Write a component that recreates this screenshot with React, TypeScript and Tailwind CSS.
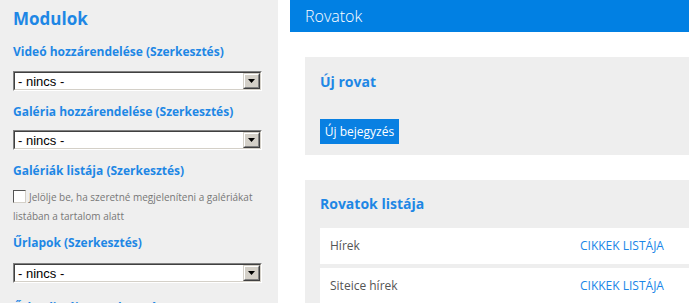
import React from "react";

function Label({ children, className = "" }: { children: React.ReactNode; className?: string }) {
  return (
    <div className={`text-[12px] leading-[16px] font-bold text-[#1e87e5] whitespace-nowrap ${className}`}>
      {children}
    </div>
  );
}

function Select({ className = "" }: { className?: string }) {
  return (
    <div
      className={`w-[249px] h-[20px] border border-t-[#808080] border-l-[#808080] border-r-white border-b-white ${className}`}
    >
      <div className="h-full flex items-stretch bg-white border border-t-[#404040] border-l-[#404040] border-r-[#d4d0c8] border-b-[#d4d0c8]">
        <span className="flex-1 pl-[3px] flex items-center text-[13px] leading-none text-black font-['Liberation_Sans',Arial,sans-serif]">
          - nincs -
        </span>
        <div className="w-[17px] h-full border border-t-[#d4d0c8] border-l-[#d4d0c8] border-r-[#404040] border-b-[#404040]">
          <div className="w-full h-full flex items-center justify-center bg-[#d4d0c8] border border-t-white border-l-white border-r-[#808080] border-b-[#808080]">
            <svg width="7" height="4" viewBox="0 0 7 4">
              <polygon points="0,0 7,0 3.5,4" fill="#000" />
            </svg>
          </div>
        </div>
      </div>
    </div>
  );
}

export default function App() {
  return (
    <div className="w-[689px] h-[303px] overflow-hidden flex bg-white font-['Open_Sans',sans-serif]">
      <aside className="w-[278px] shrink-0 bg-[#efefef] pl-[13px] pt-[7px]">
        <h2 className="text-[17px] leading-[24px] font-bold text-[#1e87e5]">Modulok</h2>
        <Label className="mt-[13px]">Videó hozzárendelése (Szerkesztés)</Label>
        <Select className="mt-[11px]" />
        <Label className="mt-[13px]">Galéria hozzárendelése (Szerkesztés)</Label>
        <Select className="mt-[10px]" />
        <Label className="mt-[13px]">Galériák listája (Szerkesztés)</Label>
        <p className="mt-[9px] w-[250px] text-[10px] leading-[19px] text-[#777]">
          <span className="inline-block align-[-2px] w-[13px] h-[13px] mr-[3px] bg-white border border-t-[#555] border-l-[#555] border-r-[#d4d0c8] border-b-[#d4d0c8]" />
          Jelölje be, ha szeretné megjeleníteni a galériákat listában a tartalom alatt
        </p>
        <Label className="mt-[9px]">Űrlapok (Szerkesztés)</Label>
        <Select className="mt-[12px]" />
        <Label className="mt-[17px]">Űrlap listája (Szerkesztés)</Label>
      </aside>
      <div className="w-[12px] shrink-0" />
      <main className="flex-1 min-w-0">
        <header className="h-[32px] bg-[#0180e3] pl-[15px] flex items-center">
          <h1 className="text-[16px] font-light text-white leading-none">Rovatok</h1>
        </header>
        <section className="mt-[25px] ml-[15px] h-[98px] bg-[#eeeeee] pl-[15px] pt-[15px]">
          <h3 className="text-[14px] leading-[20px] font-bold text-[#1e87e5]">Új rovat</h3>
          <button className="mt-[27px] w-[79px] h-[25px] bg-[#0980e2] text-white text-[12px] leading-none flex items-center justify-center">
            Új bejegyzés
          </button>
        </section>
        <section className="mt-[25px] ml-[15px] h-[200px] bg-[#eeeeee] pl-[15px] pt-[14px]">
          <h3 className="text-[14px] leading-[20px] font-bold text-[#1e87e5]">Rovatok listája</h3>
          <div className="mt-[14px] flex flex-col gap-[4px]">
            {["Hírek", "Siteice hírek"].map((name) => (
              <div key={name} className="h-[36px] bg-white flex items-center pl-[10px] text-[12px]">
                <span className="w-[250px] text-[#555]">{name}</span>
                <span className="uppercase text-[#1a86e8]">Cikkek listája</span>
              </div>
            ))}
          </div>
        </section>
      </main>
    </div>
  );
}
